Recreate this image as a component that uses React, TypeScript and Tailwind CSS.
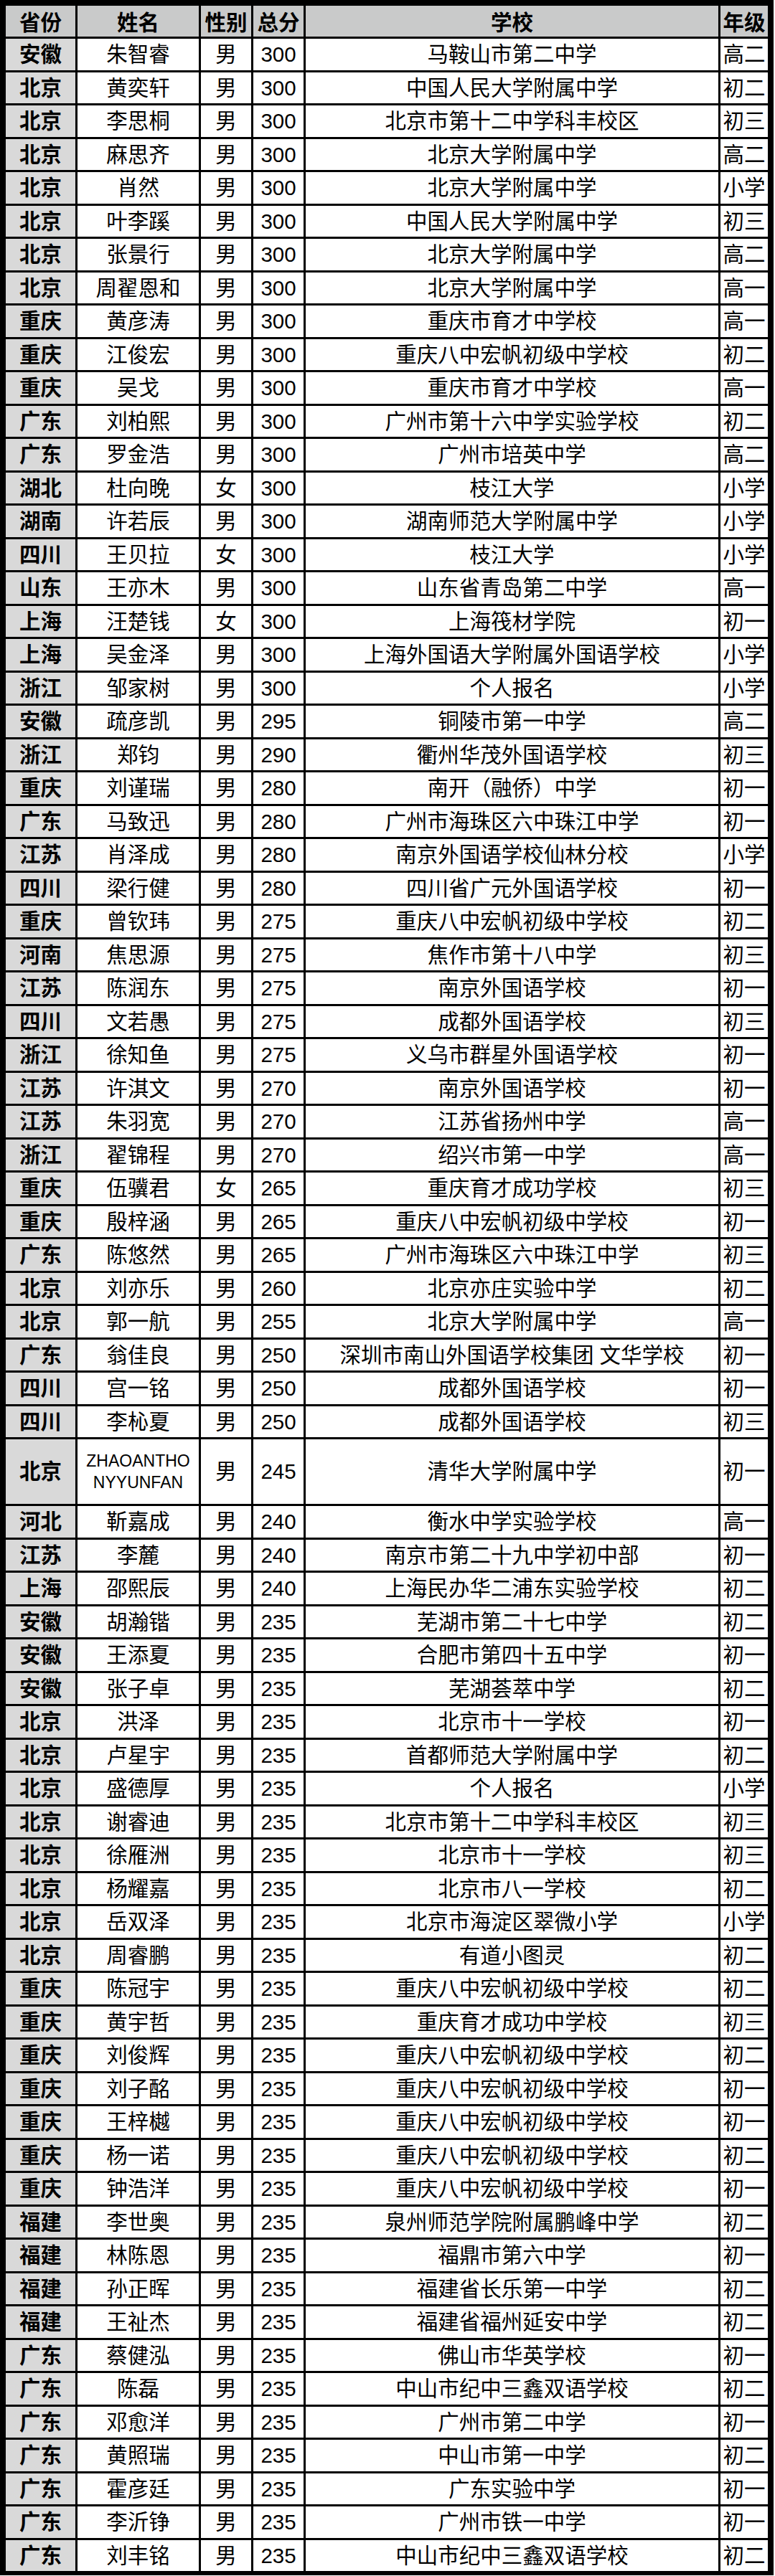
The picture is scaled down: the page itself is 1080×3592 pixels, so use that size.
import React from 'react';

type Row = [string, string, string, string, string, string];

const rows: Row[] = [
  ['安徽', '朱智睿', '男', '300', '马鞍山市第二中学', '高二'],
  ['北京', '黄奕轩', '男', '300', '中国人民大学附属中学', '初二'],
  ['北京', '李思桐', '男', '300', '北京市第十二中学科丰校区', '初三'],
  ['北京', '麻思齐', '男', '300', '北京大学附属中学', '高二'],
  ['北京', '肖然', '男', '300', '北京大学附属中学', '小学'],
  ['北京', '叶李蹊', '男', '300', '中国人民大学附属中学', '初三'],
  ['北京', '张景行', '男', '300', '北京大学附属中学', '高二'],
  ['北京', '周翟恩和', '男', '300', '北京大学附属中学', '高一'],
  ['重庆', '黄彦涛', '男', '300', '重庆市育才中学校', '高一'],
  ['重庆', '江俊宏', '男', '300', '重庆八中宏帆初级中学校', '初二'],
  ['重庆', '吴戈', '男', '300', '重庆市育才中学校', '高一'],
  ['广东', '刘柏熙', '男', '300', '广州市第十六中学实验学校', '初二'],
  ['广东', '罗金浩', '男', '300', '广州市培英中学', '高二'],
  ['湖北', '杜向晚', '女', '300', '枝江大学', '小学'],
  ['湖南', '许若辰', '男', '300', '湖南师范大学附属中学', '小学'],
  ['四川', '王贝拉', '女', '300', '枝江大学', '小学'],
  ['山东', '王亦木', '男', '300', '山东省青岛第二中学', '高一'],
  ['上海', '汪楚钱', '女', '300', '上海筏材学院', '初一'],
  ['上海', '吴金泽', '男', '300', '上海外国语大学附属外国语学校', '小学'],
  ['浙江', '邹家树', '男', '300', '个人报名', '小学'],
  ['安徽', '疏彦凯', '男', '295', '铜陵市第一中学', '高二'],
  ['浙江', '郑钧', '男', '290', '衢州华茂外国语学校', '初三'],
  ['重庆', '刘谨瑞', '男', '280', '南开（融侨）中学', '初一'],
  ['广东', '马致迅', '男', '280', '广州市海珠区六中珠江中学', '初一'],
  ['江苏', '肖泽成', '男', '280', '南京外国语学校仙林分校', '小学'],
  ['四川', '梁行健', '男', '280', '四川省广元外国语学校', '初一'],
  ['重庆', '曾钦玮', '男', '275', '重庆八中宏帆初级中学校', '初二'],
  ['河南', '焦思源', '男', '275', '焦作市第十八中学', '初三'],
  ['江苏', '陈润东', '男', '275', '南京外国语学校', '初一'],
  ['四川', '文若愚', '男', '275', '成都外国语学校', '初三'],
  ['浙江', '徐知鱼', '男', '275', '义乌市群星外国语学校', '初一'],
  ['江苏', '许淇文', '男', '270', '南京外国语学校', '初一'],
  ['江苏', '朱羽宽', '男', '270', '江苏省扬州中学', '高一'],
  ['浙江', '翟锦程', '男', '270', '绍兴市第一中学', '高一'],
  ['重庆', '伍骥君', '女', '265', '重庆育才成功学校', '初三'],
  ['重庆', '殷梓涵', '男', '265', '重庆八中宏帆初级中学校', '初一'],
  ['广东', '陈悠然', '男', '265', '广州市海珠区六中珠江中学', '初三'],
  ['北京', '刘亦乐', '男', '260', '北京亦庄实验中学', '初二'],
  ['北京', '郭一航', '男', '255', '北京大学附属中学', '高一'],
  ['广东', '翁佳良', '男', '250', '深圳市南山外国语学校集团 文华学校', '初一'],
  ['四川', '宫一铭', '男', '250', '成都外国语学校', '初一'],
  ['四川', '李杺夏', '男', '250', '成都外国语学校', '初三'],
  ['北京', 'ZHAOANTHONYYUNFAN', '男', '245', '清华大学附属中学', '初一'],
  ['河北', '靳嘉成', '男', '240', '衡水中学实验学校', '高一'],
  ['江苏', '李麓', '男', '240', '南京市第二十九中学初中部', '初一'],
  ['上海', '邵熙辰', '男', '240', '上海民办华二浦东实验学校', '初二'],
  ['安徽', '胡瀚锴', '男', '235', '芜湖市第二十七中学', '初二'],
  ['安徽', '王添夏', '男', '235', '合肥市第四十五中学', '初一'],
  ['安徽', '张子卓', '男', '235', '芜湖荟萃中学', '初二'],
  ['北京', '洪泽', '男', '235', '北京市十一学校', '初一'],
  ['北京', '卢星宇', '男', '235', '首都师范大学附属中学', '初二'],
  ['北京', '盛德厚', '男', '235', '个人报名', '小学'],
  ['北京', '谢睿迪', '男', '235', '北京市第十二中学科丰校区', '初三'],
  ['北京', '徐雁洲', '男', '235', '北京市十一学校', '初三'],
  ['北京', '杨耀嘉', '男', '235', '北京市八一学校', '初二'],
  ['北京', '岳双泽', '男', '235', '北京市海淀区翠微小学', '小学'],
  ['北京', '周睿鹏', '男', '235', '有道小图灵', '初二'],
  ['重庆', '陈冠宇', '男', '235', '重庆八中宏帆初级中学校', '初二'],
  ['重庆', '黄宇哲', '男', '235', '重庆育才成功中学校', '初三'],
  ['重庆', '刘俊辉', '男', '235', '重庆八中宏帆初级中学校', '初二'],
  ['重庆', '刘子酩', '男', '235', '重庆八中宏帆初级中学校', '初一'],
  ['重庆', '王梓樾', '男', '235', '重庆八中宏帆初级中学校', '初一'],
  ['重庆', '杨一诺', '男', '235', '重庆八中宏帆初级中学校', '初二'],
  ['重庆', '钟浩洋', '男', '235', '重庆八中宏帆初级中学校', '初一'],
  ['福建', '李世奥', '男', '235', '泉州师范学院附属鹏峰中学', '初二'],
  ['福建', '林陈恩', '男', '235', '福鼎市第六中学', '初一'],
  ['福建', '孙正晖', '男', '235', '福建省长乐第一中学', '初二'],
  ['福建', '王祉杰', '男', '235', '福建省福州延安中学', '初二'],
  ['广东', '蔡健泓', '男', '235', '佛山市华英学校', '初一'],
  ['广东', '陈磊', '男', '235', '中山市纪中三鑫双语学校', '初二'],
  ['广东', '邓愈洋', '男', '235', '广州市第二中学', '初一'],
  ['广东', '黄照瑞', '男', '235', '中山市第一中学', '初二'],
  ['广东', '霍彦廷', '男', '235', '广东实验中学', '初一'],
  ['广东', '李沂铮', '男', '235', '广州市铁一中学', '初一'],
  ['广东', '刘丰铭', '男', '235', '中山市纪中三鑫双语学校', '初二'],
];

const headers = ['省份', '姓名', '性别', '总分', '学校', '年级'];

const gridCols = 'grid grid-cols-[97px_169px_70px_70px_575px_66px] gap-x-[3px]';
const cell = 'flex items-center justify-center whitespace-nowrap leading-none';

export default function App() {
  return (
    <div
      className="w-[1080px] bg-white text-black text-[29.5px]"
      style={{ fontFamily: '"Liberation Sans", "Noto Sans CJK SC", sans-serif' }}
    >
      <div className="mr-[2px] bg-black pt-[8px] pl-[8px] pr-[8px] pb-[6px] flex flex-col gap-[3px]">
        {/* header */}
        <div className={`${gridCols} h-[43px]`}>
          {headers.map((h) => (
            <div key={h} className={`${cell} bg-[#c9caca] font-bold pt-[4px]`}>
              {h}
            </div>
          ))}
        </div>

        {rows.map((r, i) => {
          const long = r[1] === 'ZHAOANTHONYYUNFAN';
          return (
            <div key={i} className={`${gridCols} ${long ? 'h-[90px]' : 'h-[43.5px]'}`}>
              <div className={`${cell} bg-[#d9d9d9] font-bold`}>{r[0]}</div>
              <div className={`${cell} bg-white`}>
                {long ? (
                  <div className="text-center text-[23px] leading-[30px]">
                    ZHAOANTHO
                    <br />
                    NYYUNFAN
                  </div>
                ) : (
                  r[1]
                )}
              </div>
              <div className={`${cell} bg-white`}>{r[2]}</div>
              <div className={`${cell} bg-white`}>{r[3]}</div>
              <div className={`${cell} bg-white`}>{r[4]}</div>
              <div className={`${cell} bg-white`}>{r[5]}</div>
            </div>
          );
        })}
      </div>
    </div>
  );
}
